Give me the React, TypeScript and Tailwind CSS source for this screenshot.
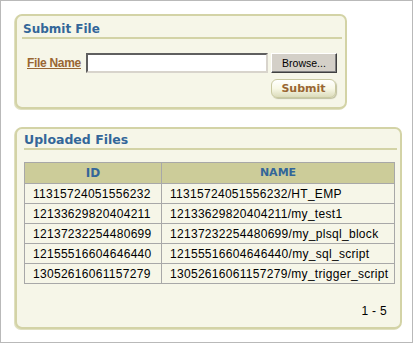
import React from "react";

const rows: [string, string][] = [
  ["11315724051556232", "11315724051556232/HT_EMP"],
  ["12133629820404211", "12133629820404211/my_test1"],
  ["12137232254480699", "12137232254480699/my_plsql_block"],
  ["12155516604646440", "12155516604646440/my_sql_script"],
  ["13052616061157279", "13052616061157279/my_trigger_script"],
];

export default function App() {
  return (
    <div className="w-[413px] h-[343px] border border-[#b9b9b9] bg-white pl-[14px] pt-[13px] font-['Liberation_Sans',Arial,sans-serif]">
      {/* Submit File panel */}
      <div className="w-[332px] h-[95px] border-2 border-[#d3d3a6] rounded-[7px] bg-[#f6f6e8] shadow-[-1px_1px_0_#e0e0c0]">
        <div className="ml-[5px] mr-[3px] mt-[6px] border-b-2 border-[#d3d3a6] pl-[1px] h-[17px] font-['DejaVu_Sans',sans-serif] font-bold text-[12px] leading-[15px] text-[#336699]">
          Submit File
        </div>
        <div className="flex items-start mt-[14px] pl-[10px]">
          <div className="w-[59px] h-[20px] flex items-center">
            <span className="text-[12px] font-bold underline text-[#996633] tracking-[-0.3px] leading-[14px]">
              File Name
            </span>
          </div>
          <input
            type="text"
            className="w-[182px] h-[20px] bg-white border-2 border-t-[#5f5f5f] border-l-[#5f5f5f] border-b-[#d8d4cc] border-r-[#d8d4cc] outline-none"
          />
          <div className="ml-[3px] flex flex-col gap-[6px]">
            <button className="w-[66px] h-[20px] bg-[#d4d0c8] border border-t-[#ffffff] border-l-[#ffffff] border-b-[#404040] border-r-[#404040] shadow-[inset_-1px_-1px_0_#808080] text-[10.5px] text-black leading-[18px]">
              Browse...
            </button>
            <button className="w-[65px] h-[19px] rounded-[6px] border border-[#c9c9a1] bg-gradient-to-b from-[#ffffff] via-[#f8f8e6] to-[#dcdcbc] shadow-[1px_1px_1px_#c0c0a0] font-['DejaVu_Sans',sans-serif] font-bold text-[11px] leading-[16px] text-[#996633]">
              Submit
            </button>
          </div>
        </div>
      </div>

      {/* Uploaded Files panel */}
      <div className="mt-[18px] w-[387px] h-[202px] border-2 border-[#d3d3a6] rounded-[7px] bg-[#f6f6e8] shadow-[-1px_1px_0_#e0e0c0]">
        <div className="ml-[7px] mr-[3px] mt-[3px] border-b-2 border-[#d3d3a6] h-[18px] font-['DejaVu_Sans',sans-serif] font-bold text-[12.5px] leading-[16px] text-[#336699]">
          Uploaded Files
        </div>
        <table className="ml-[7px] mt-[12px] w-[371px] border-collapse border border-[#a8a8a8] text-[12px] tracking-[0.3px] text-black">
          <thead>
            <tr className="bg-[#cccc99] h-[21px]">
              <th className="w-[137px] border border-[#a8a8a8] font-['DejaVu_Sans',sans-serif] font-bold text-[12px] tracking-normal text-[#336699] text-center">
                ID
              </th>
              <th className="border border-[#a8a8a8] font-['DejaVu_Sans',sans-serif] font-bold text-[11px] tracking-normal text-[#336699] text-center">
                NAME
              </th>
            </tr>
          </thead>
          <tbody>
            {rows.map(([id, name]) => (
              <tr key={id} className="h-[20px] bg-[#f6f6e8]">
                <td className="border border-[#a8a8a8] pl-[8px] leading-[14px] py-0">{id}</td>
                <td className="border border-[#a8a8a8] pl-[8px] leading-[14px] py-0">{name}</td>
              </tr>
            ))}
          </tbody>
        </table>
        <div className="flex justify-end mr-[13px] mt-[20px] text-[12px] tracking-[0.3px] leading-[14px] text-black">
          1 - 5
        </div>
      </div>
    </div>
  );
}
